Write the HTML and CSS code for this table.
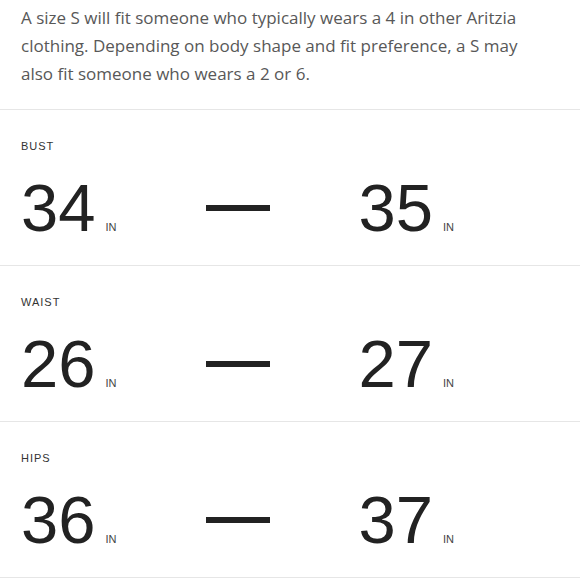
FILE: index.html
```html
<!DOCTYPE html>
<html>
<head>
<meta charset="utf-8">
<link rel="stylesheet" href="styles.css">
</head>
<body>
<div class="sheet">
  <p class="intro">A size S will fit someone who typically wears a 4 in other Aritzia clothing. Depending on body shape and fit preference, a S may also fit someone who wears a 2 or 6.</p>
  <section class="measure">
    <div class="label">BUST</div>
    <div class="range">
      <div class="value"><span class="num">34</span><span class="unit">IN</span></div>
      <div class="dash"></div>
      <div class="value"><span class="num">35</span><span class="unit">IN</span></div>
    </div>
  </section>
  <section class="measure">
    <div class="label">WAIST</div>
    <div class="range">
      <div class="value"><span class="num">26</span><span class="unit">IN</span></div>
      <div class="dash"></div>
      <div class="value"><span class="num">27</span><span class="unit">IN</span></div>
    </div>
  </section>
  <section class="measure">
    <div class="label">HIPS</div>
    <div class="range">
      <div class="value"><span class="num">36</span><span class="unit">IN</span></div>
      <div class="dash"></div>
      <div class="value"><span class="num">37</span><span class="unit">IN</span></div>
    </div>
  </section>
</div>
</body>
</html>
```
FILE: styles.css
```css
html, body {
  margin: 0;
  padding: 0;
  background: #ffffff;
}
.sheet {
  width: 580px;
}
.intro {
  margin: 0;
  padding: 4px 38px 21px 21px;
  font-family: "Open Sans", "Liberation Sans", sans-serif;
  font-size: 17px;
  line-height: 28px;
  color: #585858;
}
.measure {
  border-top: 1px solid #e6e6e6;
  padding: 28px 21px 24px 21px;
}
.measure:last-child {
  border-bottom: 1px solid #e6e6e6;
}
.label {
  font-family: "Liberation Sans", Arial, sans-serif;
  font-size: 11px;
  line-height: 16px;
  letter-spacing: 1px;
  color: #333333;
}
.range {
  margin-top: 20px;
  display: flex;
  align-items: center;
  gap: 89px;
}
.value {
  display: flex;
  align-items: baseline;
}
.num {
  font-family: "Liberation Sans", Arial, sans-serif;
  font-size: 67px;
  line-height: 67px;
  color: #222222;
}
.unit {
  margin-left: 10px;
  font-family: "Liberation Sans", Arial, sans-serif;
  font-size: 11px;
  color: #444444;
}
.dash {
  width: 64px;
  height: 6px;
  background: #222222;
}
```
